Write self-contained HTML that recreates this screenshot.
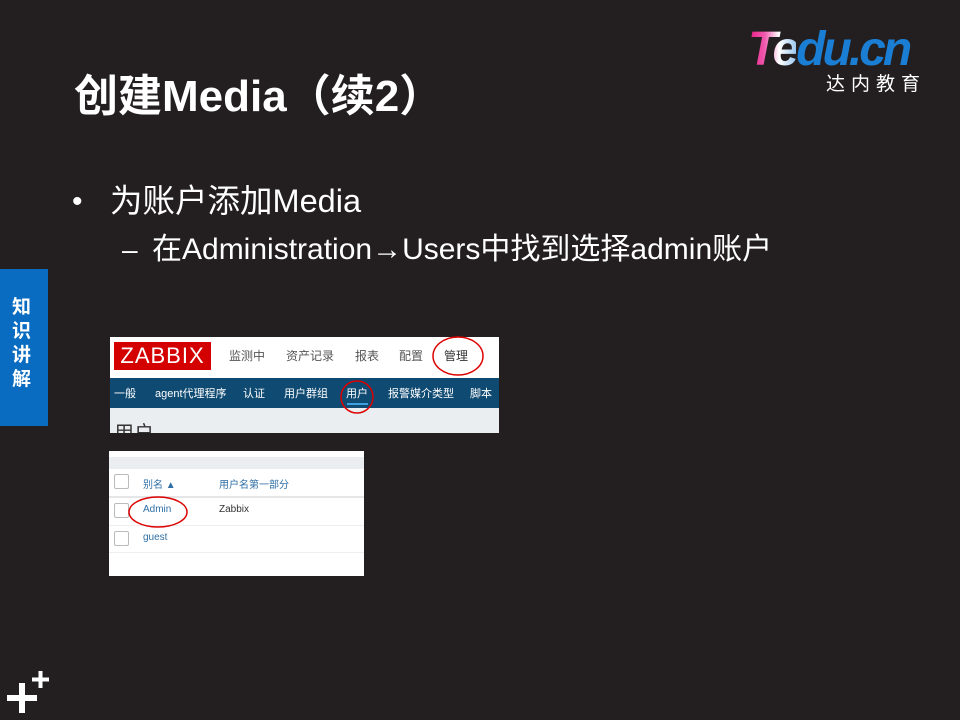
<!DOCTYPE html>
<html><head><meta charset="utf-8"><style>
*{margin:0;padding:0;box-sizing:border-box}
body{width:960px;height:720px;background:#231f20;position:relative;overflow:hidden;font-family:"Liberation Sans","Noto Sans CJK SC",sans-serif;color:#fff}
.a{position:absolute;white-space:nowrap}
</style></head><body>
<div class="a" style="left:74px;top:70px;font-size:44px;font-weight:bold;line-height:54px">创建Media（续2）</div>
<div class="a" style="left:748px;top:24px;font-size:48px;font-weight:bold;font-style:italic;letter-spacing:-3px;line-height:52px"><span style="background:linear-gradient(90deg,#e8177f 0%,#f05ab0 35%,#fff 65%,#9cc8f0 100%);-webkit-background-clip:text;color:transparent">Te</span><span style="color:#1a7fd4">du.cn</span></div>
<div class="a" style="left:826px;top:74px;font-size:19px;letter-spacing:6px;line-height:22px">达内教育</div>
<div class="a" style="left:72px;top:184px;font-size:30px;line-height:36px">•</div>
<div class="a" style="left:110px;top:181px;font-size:32.5px;line-height:40px">为账户添加Media</div>
<div class="a" style="left:122px;top:232px;font-size:28px;line-height:36px">–</div>
<div class="a" style="left:152px;top:231px;font-size:30px;line-height:38px">在Administration→Users中找到选择admin账户</div>
<div class="a" style="left:0;top:269px;width:48px;height:157px;background:#0a6cc0"></div>
<div class="a" style="left:12px;top:296px;font-size:19px;font-weight:bold;line-height:24px;white-space:normal;width:24px">知识讲解</div>
<svg class="a" style="left:0;top:665px" width="60" height="55"><path d="M7 33h30M22 18v30" stroke="#fff" stroke-width="6"/><path d="M32 14.5h17M40.5 6v17" stroke="#fff" stroke-width="4"/></svg>
<!-- zabbix top -->
<div class="a" style="left:110px;top:337px;width:389px;height:96px;background:#fff;overflow:hidden">
 <div class="a" style="left:4px;top:5px;width:97px;height:28px;background:#d40000;color:#fff;font-size:22px;line-height:28px;text-align:center;letter-spacing:1px">ZABBIX</div>
 <div class="a" style="left:119px;top:10px;font-size:12px;color:#555">监测中</div>
 <div class="a" style="left:176px;top:10px;font-size:12px;color:#555">资产记录</div>
 <div class="a" style="left:245px;top:10px;font-size:12px;color:#555">报表</div>
 <div class="a" style="left:289px;top:10px;font-size:12px;color:#555">配置</div>
 <div class="a" style="left:334px;top:10px;font-size:12px;color:#333">管理</div>
 <div class="a" style="left:0;top:41px;width:389px;height:30px;background:#0f4a72"></div>
 <div class="a" style="left:4px;top:48px;font-size:11px;color:#fff">一般</div>
 <div class="a" style="left:45px;top:48px;font-size:11px;color:#fff">agent代理程序</div>
 <div class="a" style="left:133px;top:48px;font-size:11px;color:#fff">认证</div>
 <div class="a" style="left:174px;top:48px;font-size:11px;color:#fff">用户群组</div>
 <div class="a" style="left:236px;top:48px;font-size:11px;color:#fff">用户</div>
 <div class="a" style="left:237px;top:66px;width:21px;height:2px;background:#3fa0e0"></div>
 <div class="a" style="left:278px;top:48px;font-size:11px;color:#fff">报警媒介类型</div>
 <div class="a" style="left:360px;top:48px;font-size:11px;color:#fff">脚本</div>
 <div class="a" style="left:0;top:71px;width:389px;height:25px;background:#ebeef0"></div>
 <div class="a" style="left:4px;top:80px;font-size:20px;color:#333">用户</div>
</div>
<svg class="a" style="left:320px;top:330px" width="180" height="90"><ellipse cx="138" cy="26" rx="25" ry="19" fill="none" stroke="#d00" stroke-width="1.5"/><ellipse cx="37" cy="67" rx="16" ry="16" fill="none" stroke="#d00" stroke-width="1.5"/></svg>
<!-- table -->
<div class="a" style="left:109px;top:451px;width:255px;height:125px;background:#fff;overflow:hidden">
 <div class="a" style="left:0;top:6px;width:255px;height:12px;background:#ebeef0"></div>
 <div class="a" style="left:0;top:45px;width:255px;height:2px;background:#e4e6e8"></div>
 <div class="a" style="left:0;top:74px;width:255px;height:1px;background:#eee"></div>
 <div class="a" style="left:0;top:101px;width:255px;height:1px;background:#eee"></div>
 <div class="a" style="left:5px;top:23px;width:15px;height:15px;border:1px solid #bbb;border-radius:2px"></div>
 <div class="a" style="left:5px;top:52px;width:15px;height:15px;border:1px solid #bbb;border-radius:2px"></div>
 <div class="a" style="left:5px;top:80px;width:15px;height:15px;border:1px solid #bbb;border-radius:2px"></div>
 <div class="a" style="left:34px;top:25px;font-size:10px;color:#2f6fa6">别名 ▲</div>
 <div class="a" style="left:110px;top:25px;font-size:10px;color:#2f6fa6">用户名第一部分</div>
 <div class="a" style="left:34px;top:53px;font-size:10px;color:#2f6fa6">Admin</div>
 <div class="a" style="left:110px;top:53px;font-size:10px;color:#333">Zabbix</div>
 <div class="a" style="left:34px;top:81px;font-size:10px;color:#2f6fa6">guest</div>
</div>
<svg class="a" style="left:125px;top:495px" width="70" height="40"><ellipse cx="33" cy="17" rx="29" ry="15" fill="none" stroke="#d00" stroke-width="1.5"/></svg>
</body></html>
